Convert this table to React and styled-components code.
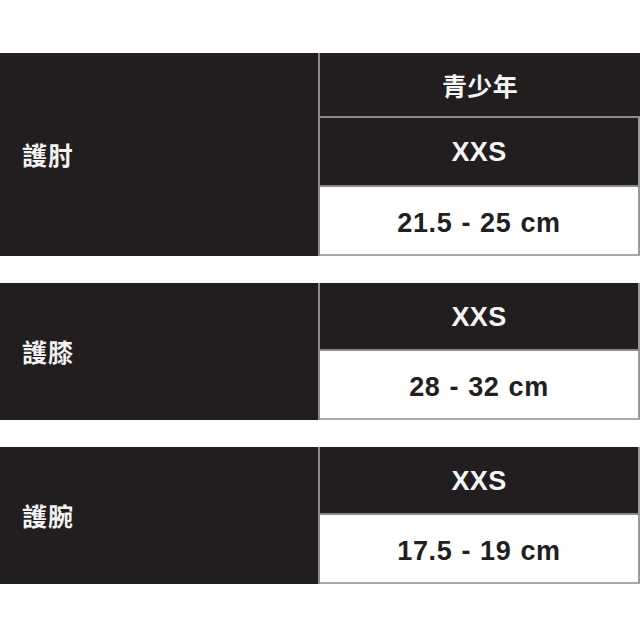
import React from "react";
import styled, { createGlobalStyle } from "styled-components";

const Global = createGlobalStyle`
  html, body { margin: 0; padding: 0; background: #ffffff; }
  body { font-family: "Liberation Sans", "Noto Sans CJK TC", sans-serif; }
`;

const Page = styled.div`
  width: 640px;
  height: 640px;
  padding-top: 53px;
  box-sizing: border-box;
  display: flex;
  flex-direction: column;
  gap: 27px;
`;

const Table = styled.div`
  display: grid;
  grid-template-columns: 318px 322px;
  background: #221e1f;
`;

const Label = styled.div`
  display: flex;
  align-items: center;
  padding-left: 22px;
  padding-bottom: 2px;
  color: #f2f2f2;
  font-family: "Noto Sans CJK TC", sans-serif;
  font-weight: 700;
  font-size: 25px;
  letter-spacing: 1px;
`;

const Column = styled.div`
  display: flex;
  flex-direction: column;
  border-left: 2px solid #8a8a8a;
`;

const Cell = styled.div`
  box-sizing: border-box;
  height: ${(p) => p.$h}px;
  display: flex;
  align-items: center;
  justify-content: center;
  padding-top: ${(p) => (p.$light ? 5 : p.$cjk ? 0 : 2)}px;
  font-weight: 700;
  font-size: ${(p) => (p.$cjk ? 25 : 27)}px;
  font-family: ${(p) =>
    p.$cjk ? `"Noto Sans CJK TC", sans-serif` : `"Liberation Sans", Arial, sans-serif`};
  background: ${(p) => (p.$light ? "#ffffff" : "#221e1f")};
  color: ${(p) => (p.$light ? "#231f20" : "#f4f4f4")};
  border-bottom: ${(p) => (p.$last ? "2px solid #a8a8a8" : "2px solid #8a8a8a")};
  border-right: ${(p) => (p.$edge ? "2px solid #9a9a9a" : "none")};
  letter-spacing: ${(p) => (p.$light ? "0.6px" : "0.3px")};
  word-spacing: ${(p) => (p.$light ? "1px" : "0")};
`;

const tables = [
  { label: "護肘", header: "青少年", size: "XXS", value: "21.5 - 25 cm" },
  { label: "護膝", size: "XXS", value: "28 - 32 cm" },
  { label: "護腕", size: "XXS", value: "17.5 - 19 cm" },
];

export default function App() {
  return (
    <>
      <Global />
      <Page>
        {tables.map((t) => (
          <Table key={t.label}>
            <Label>{t.label}</Label>
            <Column>
              {t.header && (
                <Cell $h={65} $cjk>
                  {t.header}
                </Cell>
              )}
              <Cell $h={t.header ? 69 : 68} $edge>
                {t.size}
              </Cell>
              <Cell $h={69} $light $edge $last>
                {t.value}
              </Cell>
            </Column>
          </Table>
        ))}
      </Page>
    </>
  );
}
